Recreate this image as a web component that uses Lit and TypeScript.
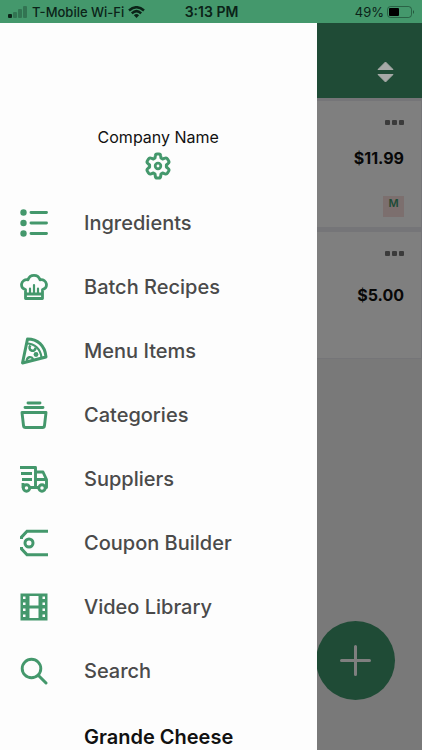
import { LitElement, html, css, svg } from "lit";
import { customElement } from "lit/decorators.js";

const icons = {
  list: svg`<g stroke-width="2.9" stroke-linecap="round"><path d="M11 3.500H26.500M11 14H26.500M11 24.500H26.500"/></g>
    <g fill="currentColor" stroke="none"><circle cx="3.500" cy="3.500" r="3.200"/><circle cx="3.500" cy="14" r="3.200"/><circle cx="3.500" cy="24.500" r="3.200"/></g>`,
  chef: svg`<g stroke-width="2.8" stroke-linejoin="round" stroke-linecap="round"><path d="M5.500 25.500V16.500C2.800 15.800 1.300 13.500 1.600 11C2 8 4.700 6.200 8 6.800C9 3.900 11.300 2.400 14 2.400S19 3.900 20 6.800C23.300 6.200 26 8 26.400 11C26.700 13.500 25.200 15.800 22.500 16.500V25.500ZM5.500 21H22.500"/><path d="M10 15.500V20M14 12V20M18 15.500V20" stroke-width="2.200"/></g>`,
  pizza: svg`<g stroke-width="3" stroke-linejoin="round"><path d="M7.500 2C17.500 2 25 8.500 26 20L2.500 26Z"/><path d="M7 6.500C14.500 6.500 20.500 12 21.500 20.500" stroke-width="2.200"/><path d="M10.500 8.500A3 3 0 1 0 15.500 10.500" stroke-width="2.500"/><path d="M7 24A3 3 0 1 1 13 22.500" stroke-width="2.500"/></g><circle cx="16" cy="17.500" r="2.400" fill="currentColor" stroke="none"/>`,
  box: svg`<g stroke-width="2.900" stroke-linecap="round" stroke-linejoin="round"><path d="M8 2H20M5 6.500H23"/><path d="M2 11.500H26L24.500 24.500Q24.300 26.500 22.500 26.500H5.500Q3.700 26.500 3.500 24.500Z"/></g>`,
  truck: svg`<g stroke-width="2.900" stroke-linejoin="round"><path d="M0 2.500H15.500V22M1 8.500H12M2 14.500H12M3 18V22.500H4M9.500 22.500H18.500M15.500 7H23L26.500 14.500V22.500H25M16 14.500H26"/><circle cx="6.500" cy="23" r="3.200"/><circle cx="22" cy="23" r="3.200"/></g>`,
  coupon: svg`<g stroke-width="3"><path d="M28 2.200H7L1.500 8.200V10M28 25.800H7L1.500 19.800V18"/><circle cx="9" cy="14" r="4"/></g>`,
  film: svg`<path fill="currentColor" stroke="none" fill-rule="evenodd" d="M.5.500H27.500V27.500H.5ZM9.500 3V12.500H18.500V3ZM9.500 15.500V25H18.500V15.500ZM3 3.500V6H5.500V3.500ZM3 9.500V12H5.500V9.500ZM3 15.500V18H5.500V15.500ZM3 21.500V24H5.500V21.500ZM22.500 3.500V6H25V3.500ZM22.500 9.500V12H25V9.500ZM22.500 15.500V18H25V15.500ZM22.500 21.500V24H25V21.500Z"/>`,
  search: svg`<circle cx="11.500" cy="11.500" r="9.300" stroke-width="2.900"/><path d="M18.500 18.500L26 26" stroke-width="3" stroke-linecap="round"/>`,
  gear: svg`<path stroke-width="3" stroke-linejoin="round" d="M11.300 4Q11.500 2 13 2H15Q16.500 2 16.700 4L17 6L18.600 7L21 6.200Q22.600 5.500 23.500 7L24.700 9Q25.500 10.500 24 11.600L22.400 13V15L24 16.400Q25.500 17.500 24.700 19L23.500 21Q22.600 22.500 21 21.800L18.600 21L17 22L16.700 24Q16.500 26 15 26H13Q11.500 26 11.300 24L11 22L9.400 21L7 21.800Q5.400 22.500 4.500 21L3.300 19Q2.500 17.500 4 16.400L5.600 15V13L4 11.600Q2.500 10.500 3.300 9L4.500 7Q5.400 5.500 7 6.200L9.400 7L11 6Z"/><circle cx="14" cy="14" r="2.800" stroke-width="2.800"/>`,
};

const icon = (shape: unknown) =>
  html`<svg class="icon" viewBox="0 0 28 28" fill="none" stroke="currentColor" aria-hidden="true">${shape}</svg>`;

const menu = [
  { label: "Ingredients", shape: icons.list },
  { label: "Batch Recipes", shape: icons.chef },
  { label: "Menu Items", shape: icons.pizza },
  { label: "Categories", shape: icons.box },
  { label: "Suppliers", shape: icons.truck },
  { label: "Coupon Builder", shape: icons.coupon },
  { label: "Video Library", shape: icons.film },
  { label: "Search", shape: icons.search },
];

const items = [
  { price: "$11.99", tag: "M" },
  { price: "$5.00", tag: "" },
];

@customElement("status-bar")
class StatusBar extends LitElement {
  static styles = css`
    :host {
      display: grid;
      grid-template-columns: 1fr auto 1fr;
      align-items: center;
      height: 23px;
      padding: 0 7px 0 8px;
      background: #44986c;
      color: #0b2318;
      font-size: 13px;
      line-height: 20px;
    }
    .side { display: flex; align-items: center; gap: 4px; white-space: nowrap; font-weight: 500; }
    .end { justify-content: flex-end; gap: 3px; font-weight: 400; }
    .time { font-size: 14px; font-weight: 600; }
    svg { display: block; flex: none; }
  `;
  render() {
    return html`
      <div class="side">
        <svg width="20" height="12" viewBox="0 0 20 12" fill="currentColor" aria-hidden="true">
          <rect x="0" y="8" width="4" height="4" rx="1"/>
          <g opacity=".3"><rect x="5" y="6" width="4" height="6" rx="1"/><rect x="10" y="3" width="4" height="9" rx="1"/><rect x="15" y="0" width="4" height="12" rx="1"/></g>
        </svg>
        <span>T-Mobile Wi-Fi</span>
        <svg width="17" height="12" viewBox="0 0 17 12" fill="none" stroke="currentColor" stroke-width="2.500" aria-hidden="true">
          <path d="M1 4.500Q8.500-2 16 4.500M3.800 7.300Q8.500 3 13.200 7.300"/><path d="M5.900 9.200Q8.500 7 11.100 9.200L8.500 12Z" fill="currentColor" stroke="none"/>
        </svg>
      </div>
      <span class="time">3:13 PM</span>
      <div class="side end">
        <span>49%</span>
        <svg width="28" height="12" viewBox="0 0 28 12" aria-hidden="true">
          <rect x=".5" y=".5" width="24" height="11" rx="3" fill="none" stroke="currentColor" opacity=".45"/>
          <rect x="2" y="2" width="10" height="8" rx="1" fill="#000"/>
          <path d="M26 4Q28 6 26 8Z" fill="currentColor" opacity=".6"/>
        </svg>
      </div>`;
  }
}

@customElement("app-root")
class AppRoot extends LitElement {
  static styles = css`
    :host {
      display: flex;
      flex-direction: column;
      height: 100vh;
      overflow: hidden;
      font-family: Inter, "Liberation Sans", sans-serif;
      color: #111;
    }
    * { box-sizing: border-box; }
    button { border: 0; padding: 0; background: none; font: inherit; color: inherit; display: block; }
    .stage { position: relative; flex: 1; min-height: 0; display: flex; }
    .page { flex: 1; background: #f2f2f2; }
    .toolbar {
      display: flex;
      justify-content: flex-end;
      align-items: flex-end;
      height: 75px;
      padding: 0 28px 14px;
      background: #3e966c;
    }
    .sort { position: relative; z-index: 1; color: #a6a9a7; }
    .sort svg { display: block; width: 17px; height: 24px; }
    .cards {
      display: flex;
      flex-direction: column;
      gap: 5px;
      margin: 0;
      padding: 3px 1px 1px 0;
      list-style: none;
      background: #eaeaf0;
    }
    .card {
      display: flex;
      flex-direction: column;
      align-items: flex-end;
      height: 126px;
      padding: 18px 17px 0;
      background: #fff;
    }
    .more { display: flex; gap: 2px; padding: 1px 0; }
    .dot { width: 5px; height: 5px; border-radius: 1px; background: #777; }
    .price { margin-top: 20px; font-size: 16px; line-height: 24px; font-weight: 700; }
    .card.plain .price { margin-top: 26px; }
    .tag {
      width: 21px;
      height: 21px;
      margin-top: 26px;
      background: #f8dedd;
      color: #3e966c;
      font-size: 11px;
      line-height: 15px;
      font-weight: 600;
      text-align: center;
    }
    .fab {
      position: absolute;
      right: 27px;
      bottom: 50px;
      display: grid;
      place-items: center;
      width: 79px;
      height: 79px;
      border-radius: 50%;
      background: #3e966c;
    }
    .scrim { position: absolute; inset: 0; background: rgba(0, 0, 0, 0.5); }
    .drawer {
      position: absolute;
      z-index: 2;
      inset: 0 25% 0 0;
      padding-top: 102px;
      overflow: hidden;
      background: #fdfdfd;
    }
    .company {
      display: flex;
      flex-direction: column;
      align-items: center;
      gap: 3px;
      margin-bottom: 11px;
      font-size: 16px;
      line-height: 24px;
    }
    .icon { display: block; width: 28px; height: 28px; color: #44986c; flex: none; }
    .link {
      display: flex;
      align-items: center;
      gap: 36px;
      height: 64px;
      padding-left: 20px;
      color: #4a4a4a;
      font-size: 20px;
      line-height: 28px;
      font-weight: 500;
      text-decoration: none;
      white-space: nowrap;
    }
    .section { margin: 20px 0 0 84px; font-size: 20px; line-height: 28px; font-weight: 600; }
  `;

  render() {
    return html`
      <status-bar></status-bar>
      <div class="stage">
        <main class="page">
          <header class="toolbar">
            <button class="sort" aria-label="Sort">
              <svg viewBox="0 0 17 24" fill="currentColor" stroke="currentColor" stroke-width="1" stroke-linejoin="round" aria-hidden="true"><path d="M1 9.500L8.500 2L16 9.500ZM1 14.500H16L8.500 22Z"/></svg>
            </button>
          </header>
          <ul class="cards">
            ${items.map(
              (item) => html`<li class="card ${item.tag ? "" : "plain"}">
                <button class="more" aria-label="More"><span class="dot"></span><span class="dot"></span><span class="dot"></span></button>
                <span class="price">${item.price}</span>
                ${item.tag ? html`<span class="tag">${item.tag}</span>` : ""}
              </li>`
            )}
          </ul>
          <button class="fab" aria-label="Add">
            <svg width="31" height="31" viewBox="0 0 31 31" stroke="#fff" stroke-width="3" stroke-linecap="round" aria-hidden="true"><path d="M15.500 1.500V29.500M1.500 15.500H29.500"/></svg>
          </button>
        </main>
        <div class="scrim"></div>
        <aside class="drawer">
          <div class="company">
            <span>Company Name</span>
            <button aria-label="Settings">${icon(icons.gear)}</button>
          </div>
          <nav>
            ${menu.map((entry) => html`<a class="link" href="#">${icon(entry.shape)}<span>${entry.label}</span></a>`)}
          </nav>
          <h2 class="section">Grande Cheese</h2>
        </aside>
      </div>`;
  }
}
